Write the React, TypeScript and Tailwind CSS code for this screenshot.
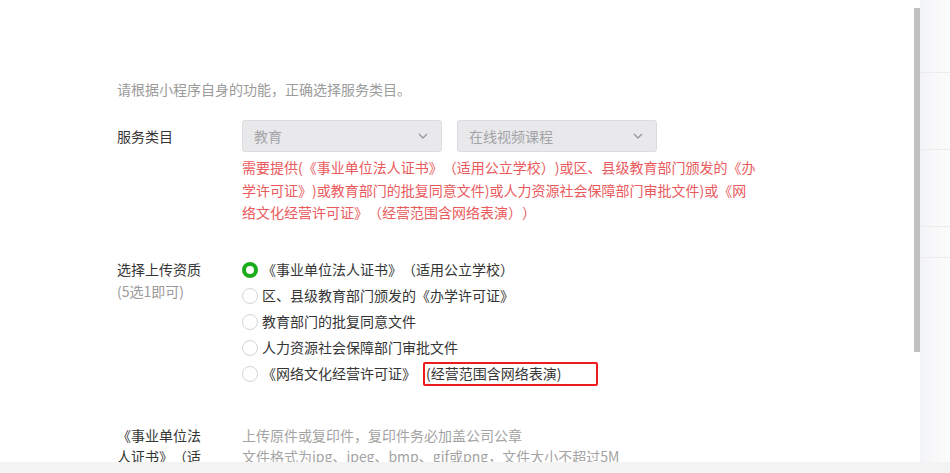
import React from "react";

const font = { fontFamily: '"Noto Sans CJK SC", "Noto Sans", sans-serif' };

function Chevron() {
  return (
    <svg width="12" height="8" viewBox="0 0 12 8" className="shrink-0">
      <path d="M2 2 L6 6 L10 2" fill="none" stroke="#9a9a9a" strokeWidth="1.4" />
    </svg>
  );
}

function Select({ label, w }: { label: string; w: string }) {
  return (
    <div
      className={`flex h-[32px] ${w} items-center justify-between rounded-[3px] border border-[#dcdcdf] bg-[#e9e9ec] pl-[11px] pr-[12px] text-[14px] text-[#a3a3a8]`}
    >
      <span>{label}</span>
      <Chevron />
    </div>
  );
}

function Radio({ checked, children }: { checked?: boolean; children: React.ReactNode }) {
  return (
    <div className="flex h-[26px] items-center">
      {checked ? (
        <span className="box-border h-[16px] w-[16px] shrink-0 rounded-full border-[4px] border-[#1aad19] bg-white" />
      ) : (
        <span className="box-border h-[16px] w-[16px] shrink-0 rounded-full border border-[#d5d5d5] bg-white" />
      )}
      <span className="ml-[4px] whitespace-nowrap text-[14px] text-[#353535]">{children}</span>
    </div>
  );
}

export default function App() {
  return (
    <div
      className="flex h-[473px] w-[950px] flex-col overflow-hidden bg-white [text-spacing-trim:space-all]"
      style={font}
    >
      <div className="flex min-h-0 flex-1">
        <div className="min-w-0 w-[914px] overflow-hidden pl-[117px] pt-[79px]">
          <div className="text-[14px] leading-[20px] text-[#9b9b9b]">
            请根据小程序自身的功能，正确选择服务类目。
          </div>

          <div className="mt-[21px] flex">
            <div className="flex h-[32px] w-[125px] items-center text-[14px] text-[#353535]">服务类目</div>
            <div className="flex flex-col">
              <div className="flex gap-[15px]">
                <Select label="教育" w="w-[200px]" />
                <Select label="在线视频课程" w="w-[200px]" />
              </div>
              <div className="mt-[4px] whitespace-nowrap text-[14px] leading-[22.5px] text-[#ea5a5c]">
                <div>需要提供(《事业单位法人证书》（适用公立学校）)或区、县级教育部门颁发的《办</div>
                <div>学许可证》)或教育部门的批复同意文件)或人力资源社会保障部门审批文件)或《网</div>
                <div>络文化经营许可证》（经营范围含网络表演））</div>
              </div>
            </div>
          </div>

          <div className="mt-[33px] flex">
            <div className="w-[125px] pt-[1px] text-[14px] leading-[22px]">
              <div className="text-[#353535]">选择上传资质</div>
              <div className="text-[#9b9b9b]">(5选1即可)</div>
            </div>
            <div className="flex flex-col">
              <Radio checked>《事业单位法人证书》（适用公立学校）</Radio>
              <Radio>区、县级教育部门颁发的《办学许可证》</Radio>
              <Radio>教育部门的批复同意文件</Radio>
              <Radio>人力资源社会保障部门审批文件</Radio>
              <div className="flex h-[26px] items-center">
                <span className="box-border h-[16px] w-[16px] shrink-0 rounded-full border border-[#d5d5d5] bg-white" />
                <span className="ml-[4px] whitespace-nowrap text-[14px] text-[#353535]">《网络文化经营许可证》</span>
                <span className="ml-[7px] flex h-[24px] w-[175px] items-center rounded-[2px] border-2 border-[#ee1c1c] pl-[1px] text-[14px] text-[#353535] whitespace-nowrap">
                  (经营范围含网络表演)
                </span>
              </div>
            </div>
          </div>

          <div className="mt-[38px] flex text-[14px] leading-[21px]">
            <div className="w-[125px] text-[#353535]">
              <div>《事业单位法</div>
              <div>人证书》（适</div>
            </div>
            <div className="text-[#a3a3a3]">
              <div>上传原件或复印件，复印件务必加盖公司公章</div>
              <div>文件格式为jpg、jpeg、bmp、gif或png，文件大小不超过5M</div>
            </div>
          </div>
        </div>

        <div className="w-[6px] shrink-0 pt-[8px]">
          <div className="h-[344px] w-[6px] bg-[#c1c1c1]" />
        </div>

        <div className="flex w-[30px] shrink-0 flex-col bg-gradient-to-r from-[#f3f4f6] to-[#fcfcfc]">
          <div className="h-[73px] border-b border-[#ececec]" />
          <div className="h-[77px] border-b border-[#ececec]" />
          <div className="h-[77px] border-b border-[#ececec]" />
          <div className="h-[31px] border-b border-[#ececec]" />
        </div>
      </div>
      <div className="h-[11px] shrink-0 bg-[#f3f3f3]" />
    </div>
  );
}
